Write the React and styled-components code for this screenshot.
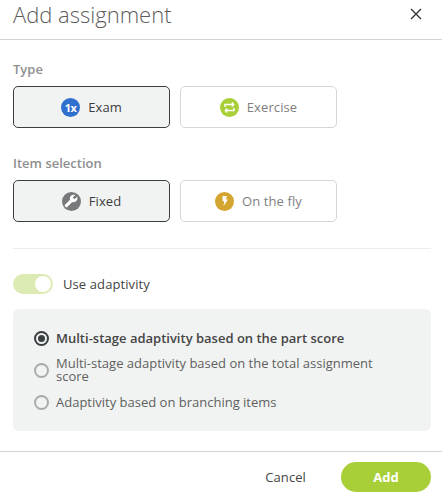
import styled, { createGlobalStyle } from 'styled-components'

const GlobalStyle = createGlobalStyle`
  * {
    box-sizing: border-box;
  }

  body {
    margin: 0;
    background: #fff;
    font-family: "Open Sans", "Noto Sans", sans-serif;
  }
`

const Dialog = styled.div`
  width: 442px;
  height: 500px;
  display: flex;
  flex-direction: column;
  overflow: hidden;
`

const Header = styled.header`
  height: 40px;
  flex: none;
  padding: 0 20px 11px 13px;
  display: flex;
  align-items: center;
  justify-content: space-between;
  border-bottom: 1px solid #d4d4d4;
`

const Title = styled.h1`
  margin: 0;
  font-size: 22px;
  font-weight: 300;
  line-height: 28px;
  color: #5c5c5c;
`

const CloseButton = styled.button`
  display: flex;
  padding: 0;
  border: 0;
  background: none;
`

const Body = styled.div`
  flex: 1;
  padding: 20px 11px 0 13px;
`

const SectionLabel = styled.div`
  font-size: 13px;
  font-weight: 600;
  line-height: 18px;
  color: #8f8f8f;
  margin-bottom: 8px;
`

const OptionRow = styled.div`
  display: flex;
  gap: 10px;
  margin-bottom: 26px;
`

const OptionCard = styled.button`
  width: 157px;
  height: 42px;
  padding: 0;
  display: flex;
  align-items: center;
  justify-content: center;
  gap: 8px;
  border-radius: 5px;
  border: 1px solid ${({ $selected }) => ($selected ? '#3a3f42' : '#d6d6d6')};
  background: ${({ $selected }) => ($selected ? '#f1f3f2' : '#fff')};
  color: ${({ $selected }) => ($selected ? '#3d3d3d' : '#808080')};
  font-family: inherit;
  font-size: 13px;
  font-weight: 500;
  letter-spacing: 0.1px;
`

const IconDisc = styled.span`
  width: 19px;
  height: 19px;
  border-radius: 50%;
  flex: none;
  display: flex;
  align-items: center;
  justify-content: center;
  background: ${({ $color }) => $color};
  color: #fff;
  font-size: 11px;
  font-weight: 700;
  letter-spacing: -0.3px;
`

const Divider = styled.hr`
  margin: 0 0 25px;
  border: 0;
  border-top: 1px solid #ececec;
  width: 418px;
`

const SwitchRow = styled.div`
  display: flex;
  align-items: center;
  gap: 10px;
  height: 20px;
  margin-bottom: 15px;
`

const SwitchTrack = styled.span`
  width: 40px;
  height: 20px;
  padding: 2px;
  border-radius: 10px;
  background: #dcebb3;
  display: flex;
  justify-content: flex-end;
`

const SwitchThumb = styled.span`
  width: 16px;
  height: 16px;
  border-radius: 50%;
  background: #fff;
`

const SwitchLabel = styled.span`
  font-size: 13px;
  font-weight: 500;
  letter-spacing: 0.1px;
  color: #444;
`

const AdaptivityPanel = styled.div`
  width: 418px;
  height: 122px;
  padding: 20px 48px 0 21px;
  display: flex;
  flex-direction: column;
  gap: 10px;
  border-radius: 6px;
  background: #f1f3f2;
`

const RadioRow = styled.label`
  display: flex;
  align-items: center;
  gap: 7px;
  min-height: 18px;
  font-size: 13px;
  line-height: 13px;
  font-weight: ${({ $selected }) => ($selected ? 600 : 400)};
  color: ${({ $selected }) => ($selected ? '#444' : '#5f5f5f')};
`

const RadioCircle = styled.span`
  width: 15px;
  height: 15px;
  flex: none;
  border-radius: 50%;
  border: 2px solid ${({ $selected }) => ($selected ? '#3a3f42' : '#aaa')};
  display: flex;
  align-items: center;
  justify-content: center;

  &::after {
    content: '';
    width: 7px;
    height: 7px;
    border-radius: 50%;
    background: ${({ $selected }) => ($selected ? '#3a3f42' : 'transparent')};
  }
`

const Footer = styled.footer`
  height: 49px;
  flex: none;
  padding: 10px 11px 0 0;
  display: flex;
  align-items: flex-start;
  justify-content: flex-end;
  gap: 35px;
  border-top: 1px solid #d4d4d4;
`

const CancelButton = styled.button`
  height: 30px;
  padding: 0;
  border: 0;
  background: none;
  font-family: inherit;
  font-size: 13px;
  font-weight: 500;
  letter-spacing: 0.1px;
  color: #444;
`

const AddButton = styled.button`
  width: 90px;
  height: 30px;
  padding: 0;
  border: 0;
  border-radius: 15px;
  background: #a8cf38;
  color: #fff;
  font-family: inherit;
  font-size: 13px;
  font-weight: 700;
`

function RepeatIcon() {
  return (
    <svg width="13" height="13" viewBox="0 0 13 13" fill="none" stroke="#fff" strokeWidth="1.4">
      <path d="M2 6V3.5h8.500M8.800 1.600l1.900 1.900-1.900 1.900" />
      <path d="M11 7v2.500H2.500M4.200 7.600 2.300 9.500l1.900 1.900" />
    </svg>
  )
}

function WrenchIcon() {
  return (
    <svg width="14" height="14" viewBox="0 0 24 24" fill="#fff">
      <path transform="matrix(-1 0 0 1 24 0)" d="M22.700 19 13.600 9.900c.9-2.300.4-5-1.500-6.900-2-2-5-2.400-7.400-1.300L9 6 6 9 1.600 4.700C.4 7.100.9 10.100 2.900 12.100c1.900 1.900 4.600 2.400 6.900 1.500l9.100 9.100c.4.400 1 .4 1.400 0l2.300-2.300c.5-.4.500-1.100.1-1.400z" />
    </svg>
  )
}

function BoltIcon() {
  return (
    <svg width="11" height="12" viewBox="0 0 11 12" fill="#fff">
      <path d="M3.500 1h4.500L6.800 4.500h2.200L4.500 11l.8-4.700H3.500z" />
    </svg>
  )
}

export default function App() {
  return (
    <Dialog>
      <GlobalStyle />
      <Header>
        <Title>Add assignment</Title>
        <CloseButton aria-label="Close">
          <svg width="12" height="12" viewBox="0 0 12 12" stroke="#333" strokeWidth="1.400" fill="none">
            <path d="M1 1l10 10M11 1 1 11" />
          </svg>
        </CloseButton>
      </Header>

      <Body>
        <SectionLabel>Type</SectionLabel>
        <OptionRow>
          <OptionCard $selected>
            <IconDisc $color="#2f6fce">1x</IconDisc>
            Exam
          </OptionCard>
          <OptionCard>
            <IconDisc $color="#a8cf38"><RepeatIcon /></IconDisc>
            Exercise
          </OptionCard>
        </OptionRow>

        <SectionLabel>Item selection</SectionLabel>
        <OptionRow>
          <OptionCard $selected>
            <IconDisc $color="#77797b"><WrenchIcon /></IconDisc>
            Fixed
          </OptionCard>
          <OptionCard>
            <IconDisc $color="#d4a52f"><BoltIcon /></IconDisc>
            On the fly
          </OptionCard>
        </OptionRow>

        <Divider />

        <SwitchRow>
          <SwitchTrack><SwitchThumb /></SwitchTrack>
          <SwitchLabel>Use adaptivity</SwitchLabel>
        </SwitchRow>

        <AdaptivityPanel>
          <RadioRow $selected>
            <RadioCircle $selected />
            Multi-stage adaptivity based on the part score
          </RadioRow>
          <RadioRow>
            <RadioCircle />
            Multi-stage adaptivity based on the total assignment score
          </RadioRow>
          <RadioRow>
            <RadioCircle />
            Adaptivity based on branching items
          </RadioRow>
        </AdaptivityPanel>
      </Body>

      <Footer>
        <CancelButton>Cancel</CancelButton>
        <AddButton>Add</AddButton>
      </Footer>
    </Dialog>
  )
}
